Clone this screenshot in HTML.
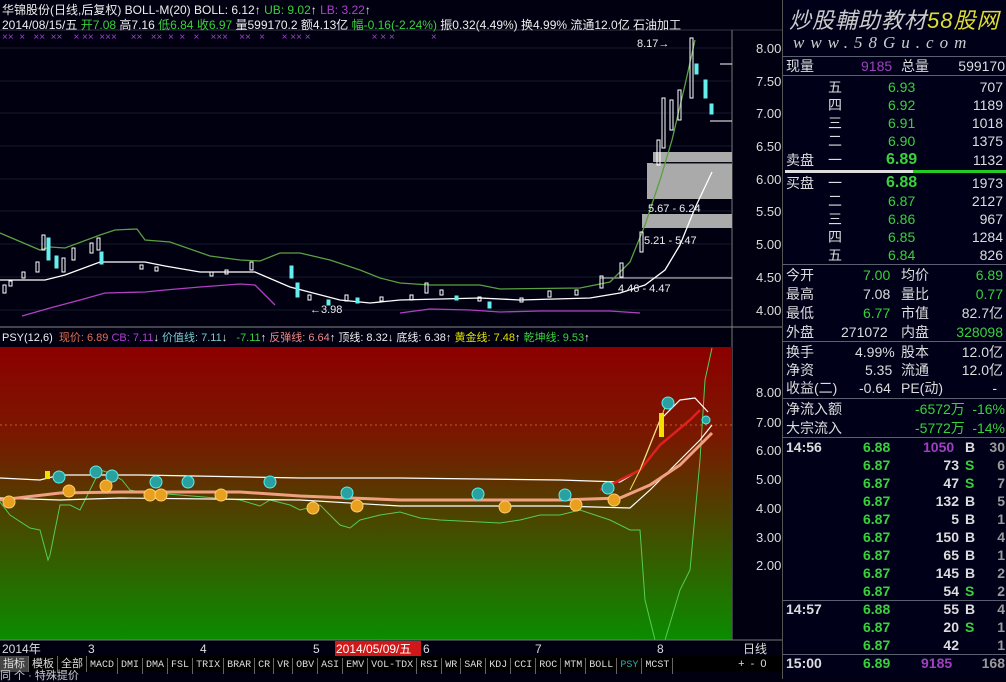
<!DOCTYPE html>
<html><head><meta charset="utf-8">
<style>
*{margin:0;padding:0;box-sizing:border-box}
body{width:1006px;height:679px;background:#000010;overflow:hidden;position:relative;font-family:"Liberation Sans","Noto Sans CJK SC",sans-serif;font-size:12px;color:#ddd}
.a{position:absolute;white-space:nowrap}
.w{color:#eee}.g{color:#3ad23a}.m{color:#b040d0}.y{color:#e0e000}
#rp{position:absolute;left:782px;top:0;width:224px;height:679px;background:#000018;border-left:1px solid #555;overflow:hidden}
.r{position:absolute;left:0;width:224px;height:18px;font-size:14px;line-height:18px}
.r span{position:absolute;white-space:nowrap}
.hl{position:absolute;left:0;width:224px;height:1px;background:#5a6070}
#tb{position:absolute;left:0;top:656px;height:16px;width:1006px;background:#000;font-size:11px;line-height:16px}
#tb span{display:inline-block;padding:0 3px;border-right:1px solid #666;color:#ddd;font-family:"Liberation Mono","Noto Sans CJK SC",monospace;font-size:10px}
</style></head><body>
<svg class="a" style="left:0;top:0" width="782" height="679">
<defs>
<linearGradient id="gr" x1="0" y1="0" x2="0" y2="1">
<stop offset="0" stop-color="#8c0000"/><stop offset="0.3" stop-color="#7a1800"/><stop offset="0.55" stop-color="#504000"/><stop offset="1" stop-color="#0a8c00"/>
</linearGradient>
</defs>
<rect x="0" y="0" width="782" height="679" fill="#000010"/>
<g stroke="#141a2a" stroke-width="1">
<line x1="0" y1="48" x2="732" y2="48"/><line x1="0" y1="81" x2="732" y2="81"/><line x1="0" y1="113" x2="732" y2="113"/><line x1="0" y1="146" x2="732" y2="146"/><line x1="0" y1="179" x2="732" y2="179"/><line x1="0" y1="211" x2="732" y2="211"/><line x1="0" y1="244" x2="732" y2="244"/><line x1="0" y1="277" x2="732" y2="277"/><line x1="0" y1="310" x2="732" y2="310"/>
</g>
<line x1="0" y1="30" x2="782" y2="30" stroke="#334" />
<line x1="732" y1="30" x2="732" y2="656" stroke="#777"/>
<line x1="0" y1="327" x2="782" y2="327" stroke="#888"/>
<rect x="653" y="152" width="79" height="10" fill="#aaa"/>
<rect x="647" y="163" width="85" height="36" fill="#aaa"/>
<rect x="642" y="214" width="90" height="14" fill="#aaa"/>
<line x1="653" y1="163" x2="732" y2="163" stroke="#111"/>
<line x1="600" y1="278" x2="732" y2="278" stroke="#ccc"/>
<polyline fill="none" stroke="#5aa040" stroke-width="1.3" points="0,233 40,250 50,247 65,248 100,235 115,230 137,229 145,240 170,242 210,256 240,260 260,261 280,253 300,253 330,260 360,270 380,278 400,283 430,285 480,285 500,289 580,288 610,282 630,262 645,225 660,180 672,140 685,85 695,40"/>
<polyline fill="none" stroke="#fff" stroke-width="1.3" points="0,280 45,280 65,275 100,262 145,262 165,266 200,272 255,272 290,287 340,300 370,303 400,300 480,298 520,300 590,298 620,293 645,285 665,270 680,245 695,208 712,172"/>
<polyline fill="none" stroke="#b040c0" stroke-width="1.3" points="22,316 50,308 80,300 105,293 145,292 165,290 200,287 240,284 255,285 265,295 275,305"/>
<polyline fill="none" stroke="#b040c0" stroke-width="1.3" points="400,313 430,309 470,310 500,312 540,311 580,311 610,311 640,313"/>
<g fill="none" stroke="#fff" stroke-width="1">
<rect x="3" y="285" width="3" height="8"/><rect x="9" y="281" width="3" height="5"/><rect x="22" y="272" width="3" height="6"/><rect x="36" y="262" width="3" height="10"/><rect x="42" y="235" width="3" height="15"/><rect x="62" y="258" width="3" height="14"/><rect x="72" y="248" width="3" height="12"/><rect x="90" y="243" width="3" height="10"/><rect x="97" y="238" width="3" height="12"/><rect x="140" y="265" width="3" height="4"/><rect x="155" y="267" width="3" height="4"/><rect x="210" y="272" width="3" height="4"/><rect x="225" y="270" width="3" height="4"/><rect x="250" y="262" width="3" height="8"/><rect x="308" y="295" width="3" height="5"/><rect x="345" y="295" width="3" height="6"/><rect x="380" y="297" width="3" height="4"/><rect x="410" y="295" width="3" height="5"/><rect x="425" y="283" width="3" height="10"/><rect x="440" y="290" width="3" height="5"/><rect x="478" y="297" width="3" height="4"/><rect x="520" y="298" width="3" height="4"/><rect x="548" y="291" width="3" height="6"/><rect x="575" y="290" width="3" height="5"/><rect x="600" y="276" width="3" height="12"/><rect x="620" y="263" width="3" height="14"/><rect x="640" y="232" width="3" height="20"/><rect x="657" y="140" width="3" height="25"/><rect x="662" y="98" width="3" height="50"/><rect x="670" y="100" width="3" height="30"/><rect x="678" y="90" width="3" height="30"/><rect x="690" y="38" width="3" height="60"/>
</g>
<g fill="#6ee" stroke="#6ee">
<rect x="47" y="238" width="3" height="22"/><rect x="55" y="256" width="3" height="12"/><rect x="100" y="252" width="3" height="12"/><rect x="290" y="266" width="3" height="12"/><rect x="296" y="283" width="3" height="14"/><rect x="327" y="300" width="3" height="5"/><rect x="356" y="298" width="3" height="5"/><rect x="455" y="296" width="3" height="4"/><rect x="488" y="302" width="3" height="6"/><rect x="695" y="64" width="3" height="10"/><rect x="704" y="80" width="3" height="18"/><rect x="710" y="104" width="3" height="10"/>
</g>
<g font-size="11" fill="#eee">
<text x="310" y="313">←3.98</text>
<text x="637" y="47">8.17→</text>
<text x="648" y="212">5.67 - 6.24</text>
<text x="644" y="244">5.21 - 5.47</text>
<text x="618" y="292">4.46 - 4.47</text>
</g>
<g font-size="10" fill="#a040d0"><text x="2" y="40">×× &#160;×&#160;&#160; ××&#160; ××&#160;&#160;&#160; × ××&#160; ×××&#160;&#160;&#160;&#160; ××&#160;&#160; ×× &#160;×&#160; ×&#160;&#160; × &#160;&#160;&#160;×××&#160;&#160;&#160; ××&#160;&#160; ×&#160;&#160;&#160;&#160;&#160; × ×× ×&#160;&#160;&#160;&#160;&#160;&#160;&#160;&#160;&#160;&#160;&#160;&#160;&#160;&#160;&#160;&#160;&#160;&#160;&#160;&#160;&#160; × × ×&#160;&#160;&#160;&#160;&#160;&#160;&#160;&#160;&#160;&#160;&#160;&#160; ×</text></g>
<g font-size="13" fill="#ddd">
<text x="756" y="53">8.00</text><text x="756" y="86">7.50</text><text x="756" y="118">7.00</text><text x="756" y="151">6.50</text><text x="756" y="184">6.00</text><text x="756" y="216">5.50</text><text x="756" y="249">5.00</text><text x="756" y="282">4.50</text><text x="756" y="315">4.00</text>
</g>
<line x1="720" y1="64" x2="732" y2="64" stroke="#fff"/>
<line x1="710" y1="121" x2="732" y2="121" stroke="#fff"/>
<rect x="0" y="347" width="732" height="293" fill="url(#gr)"/>
<line x1="0" y1="425" x2="732" y2="425" stroke="#c06020" stroke-dasharray="2,3"/>
<polyline fill="none" stroke="#5c5" stroke-width="1" points="0,502 10,515 30,528 40,530 48,560 50,555 60,505 70,505 80,510 90,490 100,470 110,473 122,480 130,490 140,492 180,495 240,500 260,506 270,500 290,505 300,510 320,505 340,525 350,528 360,520 380,515 400,512 420,518 440,520 480,522 500,523 520,520 540,515 560,515 580,510 610,520 630,530 640,530 645,600 655,640 665,640 680,590 690,570 700,460 705,380 712,348"/>
<polyline fill="none" stroke="#fff" stroke-width="1.2" points="0,478 40,480 60,475 140,475 300,478 400,478 560,480 620,482 640,470 660,420 680,400 695,398 708,412"/>
<polyline fill="none" stroke="#fff" stroke-width="1.2" points="0,498 60,500 120,498 300,500 400,506 560,506 630,508 650,490 670,470 700,440 712,425"/>
<polyline fill="none" stroke="#f0a080" stroke-width="3" points="0,500 60,493 120,492 240,492 300,496 400,500 560,500 620,498 650,485 680,465 712,433"/>
<polyline fill="none" stroke="#e02020" stroke-width="2.5" points="600,490 640,470 660,445 690,420 700,410"/>
<polyline fill="none" stroke="#f0e060" stroke-width="1" points="630,490 640,470 650,445 660,420 668,400"/>
<rect x="659" y="413" width="5" height="24" fill="#f0e000"/>
<rect x="45" y="471" width="5" height="8" fill="#f0e000"/>
<g fill="#2aa0a0" stroke="#5ee" stroke-width="1">
<circle cx="59" cy="477" r="6"/><circle cx="96" cy="472" r="6"/><circle cx="112" cy="476" r="6"/><circle cx="156" cy="482" r="6"/><circle cx="188" cy="482" r="6"/><circle cx="270" cy="482" r="6"/><circle cx="347" cy="493" r="6"/><circle cx="478" cy="494" r="6"/><circle cx="565" cy="495" r="6"/><circle cx="608" cy="488" r="6"/><circle cx="668" cy="403" r="6"/><circle cx="706" cy="420" r="4"/>
</g>
<g fill="#e8a020" stroke="#fc6" stroke-width="1">
<circle cx="9" cy="502" r="6"/><circle cx="69" cy="491" r="6"/><circle cx="106" cy="486" r="6"/><circle cx="150" cy="495" r="6"/><circle cx="161" cy="495" r="6"/><circle cx="221" cy="495" r="6"/><circle cx="313" cy="508" r="6"/><circle cx="357" cy="506" r="6"/><circle cx="505" cy="507" r="6"/><circle cx="576" cy="505" r="6"/><circle cx="614" cy="500" r="6"/>
</g>
<g font-size="13" fill="#ddd">
<text x="756" y="397">8.00</text><text x="756" y="427">7.00</text><text x="756" y="455">6.00</text><text x="756" y="484">5.00</text><text x="756" y="513">4.00</text><text x="756" y="542">3.00</text><text x="756" y="570">2.00</text>
</g>
<rect x="0" y="640" width="782" height="16" fill="#000010"/>
<line x1="0" y1="640" x2="782" y2="640" stroke="#777"/>
<rect x="335" y="641" width="86" height="15" fill="#d01818"/>
<g font-size="12" fill="#ddd">
<text x="2" y="653">2014年</text><text x="88" y="653">3</text><text x="200" y="653">4</text><text x="313" y="653">5</text><text x="336" y="653" fill="#fff">2014/05/09/五</text><text x="423" y="653">6</text><text x="535" y="653">7</text><text x="657" y="653">8</text><text x="743" y="653">日线</text>
</g>
</svg>
<div class="a w" style="left:2px;top:1px;font-size:12px">华锦股份(日线,后复权) BOLL-M(20) BOLL: 6.12↑ <span class="g">UB: 9.02</span>↑ <span class="m">LB: 3.22</span>↑</div>
<div class="a w" style="left:2px;top:16px;font-size:12px">2014/08/15/五 <span class="g">开7.08</span> 高7.16 <span class="g">低6.84 收6.97</span> 量599170.2 额4.13亿 <span class="g">幅-0.16(-2.24%)</span> 振0.32(4.49%) 换4.99% 流通12.0亿 石油加工</div>
<div class="a" style="left:2px;top:329px;font-size:11px;color:#eee">PSY(12,6) &nbsp;<span style="color:#e07050">现价: 6.89</span> <span class="m">CB: 7.11</span>↓ <span style="color:#7cc">价值线: 7.11</span>↓ &nbsp; <span class="g">-7.11</span>↑ <span style="color:#e88">反弹线: 6.64</span>↑ 顶线: 8.32↓ 底线: 6.38↑ <span class="y">黄金线: 7.48</span>↑ <span class="g">乾坤线: 9.53</span>↑</div>
<div id="rp">
<div class="a" style="left:6px;top:3px;font-size:22px;font-style:italic;color:#ccc;letter-spacing:1px">炒股輔助教材<span style="color:#dd3">58股网</span></div>
<div class="a" style="left:10px;top:33px;font-size:17px;font-style:italic;color:#ccc;letter-spacing:6px;font-family:'Liberation Serif',serif">www.58Gu.com</div>
<div class="hl" style="top:56px"></div>
<div class="r" style="top:57px"><span style="left:3px">现量</span><span style="left:78px;color:#a040c0">9185</span><span style="left:118px">总量</span><span style="right:2px">599170</span></div>
<div class="hl" style="top:75px"></div>
<div class="r" style="top:78px"><span style="left:45px">五</span><span style="left:105px" class="g">6.93</span><span style="right:4px">707</span></div>
<div class="r" style="top:96px"><span style="left:45px">四</span><span style="left:105px" class="g">6.92</span><span style="right:4px">1189</span></div>
<div class="r" style="top:114px"><span style="left:45px">三</span><span style="left:105px" class="g">6.91</span><span style="right:4px">1018</span></div>
<div class="r" style="top:132px"><span style="left:45px">二</span><span style="left:105px" class="g">6.90</span><span style="right:4px">1375</span></div>
<div class="r" style="top:151px"><span style="left:3px">卖盘</span><span style="left:45px">一</span><span style="left:103px;font-size:16px;font-weight:bold" class="g">6.89</span><span style="right:4px">1132</span></div>
<div class="a" style="left:2px;top:170px;width:128px;height:3px;background:#ddd"></div>
<div class="a" style="left:130px;top:170px;width:94px;height:3px;background:#2c2"></div>
<div class="r" style="top:174px"><span style="left:3px">买盘</span><span style="left:45px">一</span><span style="left:103px;font-size:16px;font-weight:bold" class="g">6.88</span><span style="right:4px">1973</span></div>
<div class="r" style="top:192px"><span style="left:45px">二</span><span style="left:105px" class="g">6.87</span><span style="right:4px">2127</span></div>
<div class="r" style="top:210px"><span style="left:45px">三</span><span style="left:105px" class="g">6.86</span><span style="right:4px">967</span></div>
<div class="r" style="top:228px"><span style="left:45px">四</span><span style="left:105px" class="g">6.85</span><span style="right:4px">1284</span></div>
<div class="r" style="top:246px"><span style="left:45px">五</span><span style="left:105px" class="g">6.84</span><span style="right:4px">826</span></div>
<div class="hl" style="top:264px"></div>
<div class="r" style="top:266px"><span style="left:3px">今开</span><span style="left:80px" class="g">7.00</span><span style="left:118px">均价</span><span style="right:4px" class="g">6.89</span></div>
<div class="r" style="top:285px"><span style="left:3px">最高</span><span style="left:80px">7.08</span><span style="left:118px">量比</span><span style="right:4px" class="g">0.77</span></div>
<div class="r" style="top:304px"><span style="left:3px">最低</span><span style="left:80px" class="g">6.77</span><span style="left:118px">市值</span><span style="right:4px">82.7亿</span></div>
<div class="r" style="top:323px"><span style="left:3px">外盘</span><span style="left:58px">271072</span><span style="left:118px">内盘</span><span style="right:4px" class="g">328098</span></div>
<div class="hl" style="top:341px"></div>
<div class="r" style="top:343px"><span style="left:3px">换手</span><span style="left:72px">4.99%</span><span style="left:118px">股本</span><span style="right:4px">12.0亿</span></div>
<div class="r" style="top:361px"><span style="left:3px">净资</span><span style="left:82px">5.35</span><span style="left:118px">流通</span><span style="right:4px">12.0亿</span></div>
<div class="r" style="top:379px"><span style="left:3px">收益(二)</span><span style="left:76px">-0.64</span><span style="left:118px">PE(动)</span><span style="right:10px">-</span></div>
<div class="hl" style="top:398px"></div>
<div class="r" style="top:400px"><span style="left:3px">净流入额</span><span style="left:132px" class="g">-6572万</span><span style="right:2px" class="g">-16%</span></div>
<div class="r" style="top:419px"><span style="left:3px">大宗流入</span><span style="left:132px" class="g">-5772万</span><span style="right:2px" class="g">-14%</span></div>
<div class="hl" style="top:437px"></div>
<div class="r" style="top:438px;font-weight:bold"><span style="left:3px">14:56</span><span style="left:80px" class="g">6.88</span><span style="left:140px;color:#a040c0">1050</span><span style="left:182px">B</span><span style="right:2px;color:#999">30</span></div>
<div class="r" style="top:456px;font-weight:bold"><span style="left:80px" class="g">6.87</span><span style="right:48px">73</span><span style="left:182px" class="g">S</span><span style="right:2px;color:#999">6</span></div>
<div class="r" style="top:474px;font-weight:bold"><span style="left:80px" class="g">6.87</span><span style="right:48px">47</span><span style="left:182px" class="g">S</span><span style="right:2px;color:#999">7</span></div>
<div class="r" style="top:492px;font-weight:bold"><span style="left:80px" class="g">6.87</span><span style="right:48px">132</span><span style="left:182px">B</span><span style="right:2px;color:#999">5</span></div>
<div class="r" style="top:510px;font-weight:bold"><span style="left:80px" class="g">6.87</span><span style="right:48px">5</span><span style="left:182px">B</span><span style="right:2px;color:#999">1</span></div>
<div class="r" style="top:528px;font-weight:bold"><span style="left:80px" class="g">6.87</span><span style="right:48px">150</span><span style="left:182px">B</span><span style="right:2px;color:#999">4</span></div>
<div class="r" style="top:546px;font-weight:bold"><span style="left:80px" class="g">6.87</span><span style="right:48px">65</span><span style="left:182px">B</span><span style="right:2px;color:#999">1</span></div>
<div class="r" style="top:564px;font-weight:bold"><span style="left:80px" class="g">6.87</span><span style="right:48px">145</span><span style="left:182px">B</span><span style="right:2px;color:#999">2</span></div>
<div class="r" style="top:582px;font-weight:bold"><span style="left:80px" class="g">6.87</span><span style="right:48px">54</span><span style="left:182px" class="g">S</span><span style="right:2px;color:#999">2</span></div>
<div class="hl" style="top:600px"></div>
<div class="r" style="top:600px;font-weight:bold"><span style="left:3px">14:57</span><span style="left:80px" class="g">6.88</span><span style="right:48px">55</span><span style="left:182px">B</span><span style="right:2px;color:#999">4</span></div>
<div class="r" style="top:618px;font-weight:bold"><span style="left:80px" class="g">6.87</span><span style="right:48px">20</span><span style="left:182px" class="g">S</span><span style="right:2px;color:#999">1</span></div>
<div class="r" style="top:636px;font-weight:bold"><span style="left:80px" class="g">6.87</span><span style="right:48px">42</span><span style="right:2px;color:#999">1</span></div>
<div class="hl" style="top:654px"></div>
<div class="r" style="top:654px;font-weight:bold"><span style="left:3px">15:00</span><span style="left:80px" class="g">6.89</span><span style="left:138px;color:#a040c0">9185</span><span style="right:2px;color:#999">168</span></div>
</div>
<div id="tb" style="width:782px"><span style="font-family:'Liberation Sans','Noto Sans CJK SC';font-size:11px;background:#444">指标</span><span style="font-family:'Liberation Sans','Noto Sans CJK SC';font-size:11px">模板</span><span style="font-family:'Liberation Sans','Noto Sans CJK SC';font-size:11px">全部</span><span>MACD</span><span>DMI</span><span>DMA</span><span>FSL</span><span>TRIX</span><span>BRAR</span><span>CR</span><span>VR</span><span>OBV</span><span>ASI</span><span>EMV</span><span>VOL-TDX</span><span>RSI</span><span>WR</span><span>SAR</span><span>KDJ</span><span>CCI</span><span>ROC</span><span>MTM</span><span>BOLL</span><span style="color:#3aa">PSY</span><span>MCST</span></div>
<div class="a" style="left:732px;top:656px;width:50px;height:16px;background:#000;font-size:11px;line-height:16px;color:#ddd">&nbsp;&nbsp;+ &nbsp;- &nbsp;0</div>
<div class="a" style="left:0;top:672px;font-size:11px;color:#ccc;line-height:9px">同 个 · 特殊提价</div>
</body></html>
